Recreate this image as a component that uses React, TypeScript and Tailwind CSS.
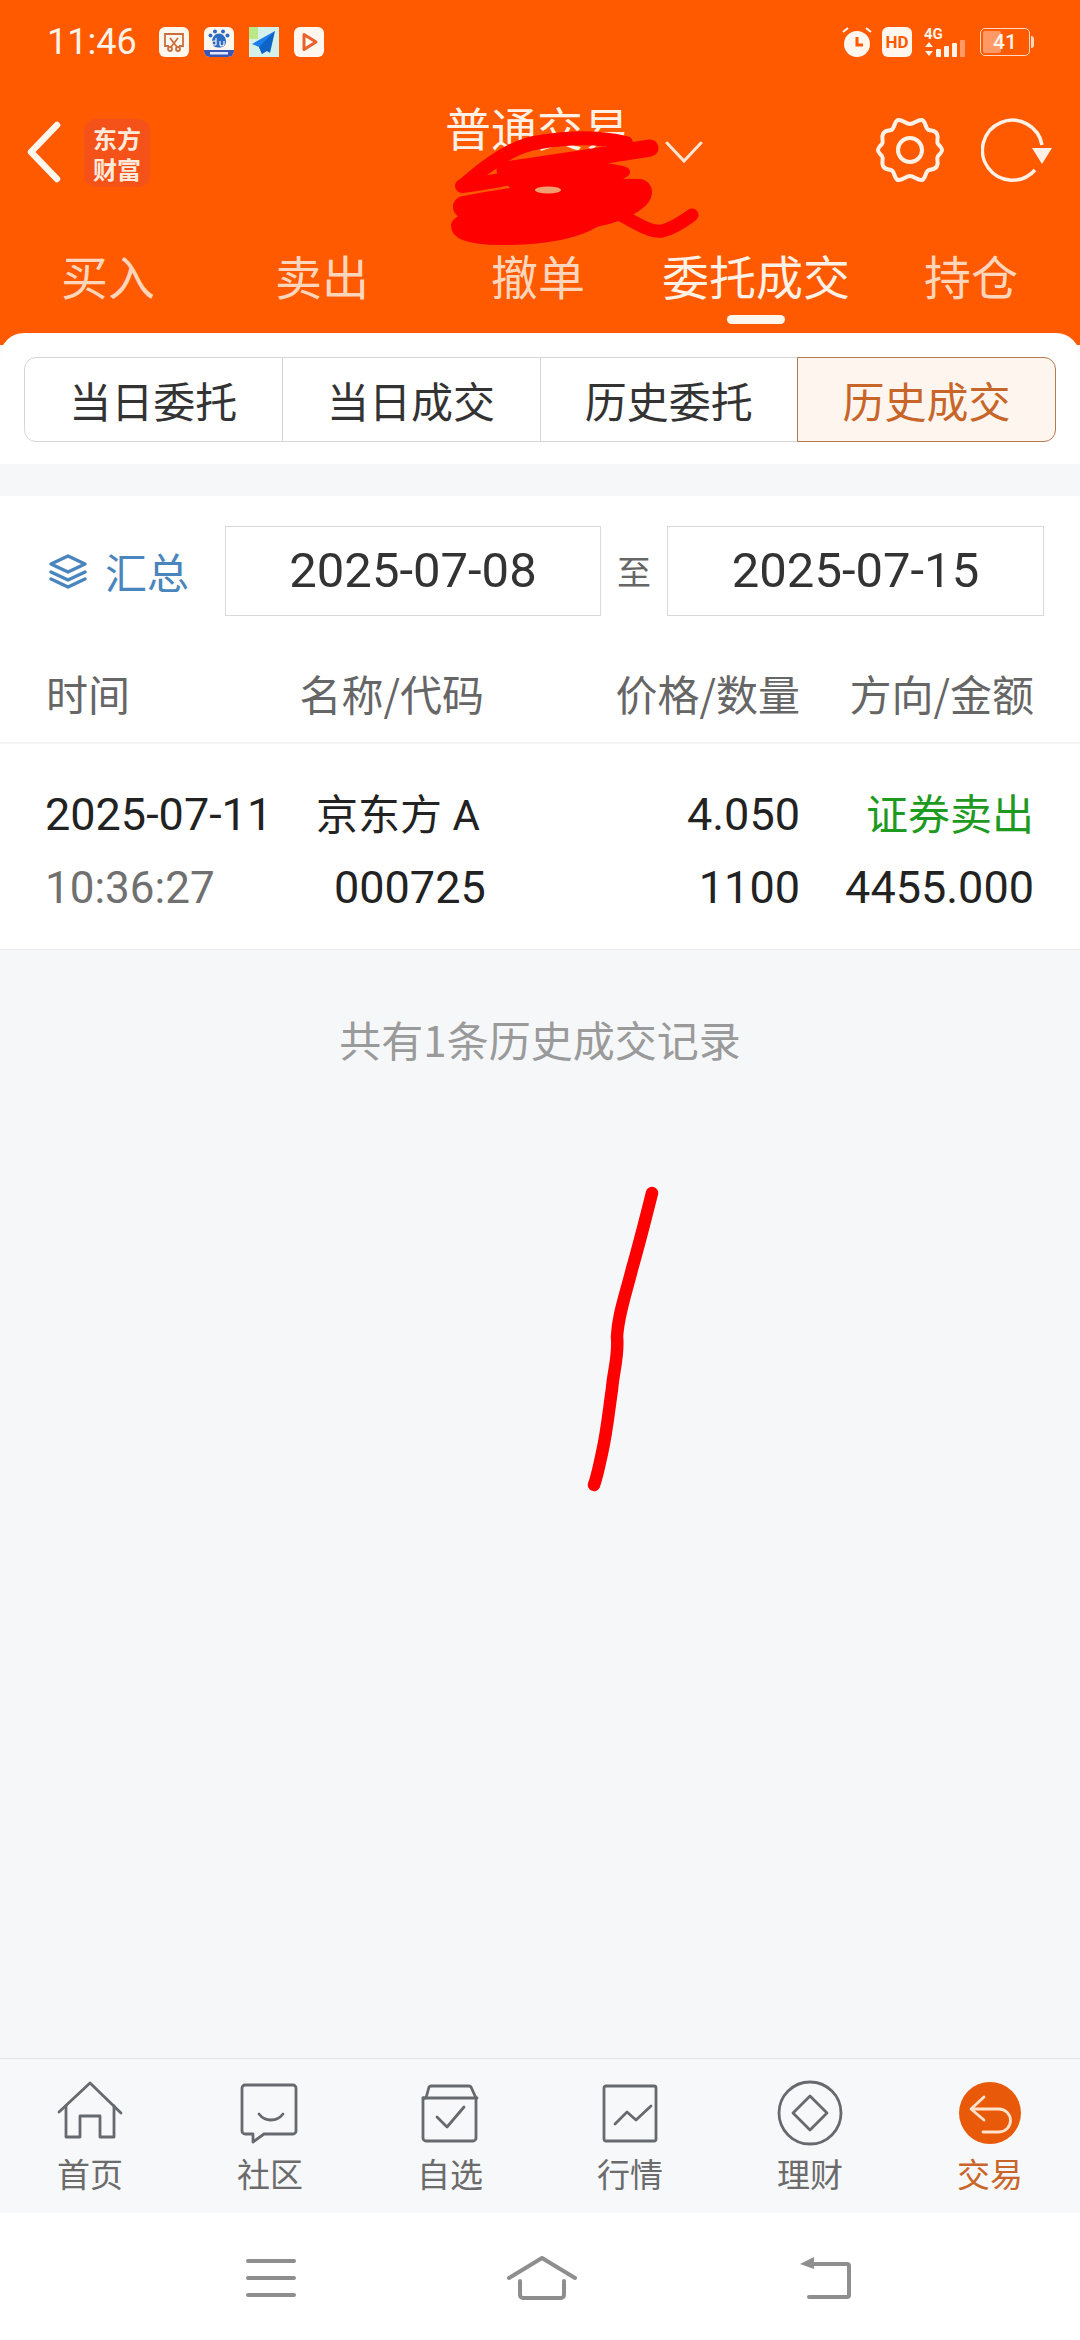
import React from "react";

const CJK = '"Noto Sans CJK SC","Roboto","Noto Sans",sans-serif';

function Tab({ label, active }: { label: string; active?: boolean }) {
  return (
    <div className={`relative text-center text-[47px] leading-[60px] ${active ? "text-[#fff1e6]" : "text-[#ffd5bb]"}`}>
      {label}
      {active && <div className="absolute left-1/2 top-[70px] h-[9px] w-[58px] -translate-x-1/2 rounded-full bg-[#fff6ec]" />}
    </div>
  );
}

function Seg({ label, first, active }: { label: string; first?: boolean; active?: boolean }) {
  return (
    <div
      className={`flex h-[85px] w-[259px] items-center justify-center border text-[42px] ${
        active
          ? "rounded-r-[12px] border-[#b4794f] bg-[#fff5ef] text-[#c8662a]"
          : "border-[#d5d5d5] text-[#333333]"
      } ${first ? "rounded-l-[12px]" : "-ml-px"}`}
    >
      {label}
    </div>
  );
}

function NavItem({ label, active, children }: { label: string; active?: boolean; children: React.ReactNode }) {
  return (
    <div className="flex w-[180px] flex-col items-center">
      <svg width="70" height="70" viewBox="0 0 70 70" fill="none" stroke="#666a6e" strokeWidth="2.8" strokeLinejoin="round" strokeLinecap="round">
        {children}
      </svg>
      <div className={`mt-[2px] text-[33px] leading-[42px] ${active ? "text-[#c9652a]" : "text-[#6b6b6b]"}`}>{label}</div>
    </div>
  );
}

export default function App() {
  return (
    <div className="relative flex h-[2340px] w-[1080px] flex-col overflow-hidden bg-[#f6f7f9]" style={{ fontFamily: CJK }}>
      {/* Header */}
      <div className="relative h-[345px] shrink-0 bg-[#ff5a00]">
        <div className="flex h-[82px] items-center justify-between pl-[47px] pr-[46px] pt-[2px]">
          <div className="flex items-center">
            <span className="w-[93px] text-[36px] leading-none text-[#fff2e6]" style={{ fontFamily: "Roboto,sans-serif" }}>11:46</span>
            <div className="ml-[19px] flex gap-[15px]">
              <div className="flex h-[30px] w-[30px] items-center justify-center rounded-[6px] bg-[#fff6ee]">
                <svg width="24" height="24" viewBox="0 0 24 24" fill="none" stroke="#c96f3d" strokeWidth="1.800">
                  <path d="M7 16H3V4h18v12h-4" />
                  <path d="M8 8l7 9M16 8l-7 9" />
                  <circle cx="8" cy="19" r="2" />
                  <circle cx="16" cy="19" r="2" />
                </svg>
              </div>
              <div className="relative flex h-[30px] w-[30px] items-center justify-center overflow-hidden rounded-[6px] bg-[#fff6ee]">
                <svg width="30" height="30" viewBox="0 0 30 30">
                  <g fill="#2b6cc4">
                    <circle cx="11" cy="4.500" r="2" />
                    <circle cx="19" cy="4.500" r="2" />
                    <circle cx="6.500" cy="8.500" r="2" />
                    <circle cx="23.500" cy="8.500" r="2" />
                    <path d="M15 6.500c3.500 0 7 3.500 7 8 0 5-3.500 6-7 6s-7-1-7-6c0-4.500 3.500-8 7-8z" />
                  </g>
                  <rect x="0" y="23" width="30" height="7" fill="#3a57b5" />
                  <rect x="6" y="25" width="18" height="2.500" fill="#dfe8ff" />
                  <path d="M12 11v7M12 18h-2a2 2 0 0 1 0-4h2M16 14v3a1.500 1.500 0 0 0 4 0v-3" fill="none" stroke="#fff6ee" strokeWidth="1.200" />
                </svg>
              </div>
              <div className="h-[30px] w-[30px]">
                <svg width="30" height="30" viewBox="0 0 30 30">
                  <rect width="30" height="30" fill="#d5f0ea" />
                  <rect width="9" height="12" fill="#b8e986" />
                  <path d="M26 4L3 17l7 3 3 7z" fill="#1a7fe8" />
                  <path d="M26 4L10 20l3 7 5-3 3 2z" fill="#0e63c7" />
                </svg>
              </div>
              <div className="flex h-[30px] w-[30px] items-center justify-center rounded-[6px] bg-[#fff6ee]">
                <svg width="22" height="22" viewBox="0 0 22 22" fill="none">
                  <path d="M6 3.500L18 11 6 18.500z" stroke="#e8602a" strokeWidth="3" strokeLinejoin="round" />
                </svg>
              </div>
            </div>
          </div>
          <div className="flex items-center">
            <svg width="30" height="32" viewBox="0 0 30 32">
              <circle cx="15" cy="18" r="13" fill="#fff6ee" />
              <path d="M15 11v8h6" stroke="#ff5a00" strokeWidth="3" fill="none" />
              <path d="M1 6l5-4M29 6l-5-4" stroke="#fff6ee" strokeWidth="2" />
            </svg>
            <div className="ml-[10px] flex h-[30px] w-[30px] items-center justify-center rounded-[6px] bg-[#fff6ee] text-[17px] font-bold leading-none text-[#ff5a00]" style={{ fontFamily: "Roboto,sans-serif" }}>
              HD
            </div>
            <svg className="ml-[12px]" width="46" height="32" viewBox="0 0 46 32">
              <text x="0" y="13" fontSize="15" fontWeight="700" fill="#fff2e6" fontFamily="Roboto,sans-serif">4G</text>
              <path d="M5 16l-4 5h8zM5 30l-4-5h8z" fill="#fff2e6" />
              <rect x="12" y="23" width="5" height="8" rx="1" fill="#fff2e6" />
              <rect x="20" y="20" width="5" height="11" rx="1" fill="#fff2e6" />
              <rect x="28" y="17" width="5" height="14" rx="1" fill="#fff2e6" />
              <rect x="36" y="14" width="5" height="17" rx="1" fill="#ff9a66" />
            </svg>
            <div className="relative ml-[10px] flex h-[28px] w-[50px] items-center justify-center overflow-hidden rounded-[5px] border-[1.5px] border-[#ffd9bf] text-[21px] font-medium leading-none text-[#fff2e6]" style={{ fontFamily: "Roboto,sans-serif" }}>
              <div className="absolute inset-y-[2px] left-[2px] w-[18px] rounded-[2px] bg-[#ff9a66]" />
              <span className="relative">41</span>
            </div>
            <div className="ml-[1px] h-[12px] w-[3px] rounded-r bg-[#ffd9bf]" />
          </div>
        </div>

        <div className="relative flex h-[150px] items-start">
          <svg className="ml-[26px] mt-[39px]" width="36" height="62" viewBox="0 0 36 62" fill="none" stroke="#fff6ee" strokeWidth="6.500" strokeLinecap="round" strokeLinejoin="round">
            <path d="M31 4L5 31l26 27" />
          </svg>
          <div className="ml-[22px] mt-[37px] flex h-[68px] w-[66px] flex-col items-center justify-center rounded-[12px] bg-[#f5521a] text-[24px] font-bold leading-[31px] text-[#ffeadb]" style={{ fontFamily: '"Noto Sans CJK SC",sans-serif' }}>
            <span>东方</span>
            <span>财富</span>
          </div>
          <div className="absolute left-[445px] top-[14px] text-[46px] leading-[60px] text-[#fff1e6]">普通交易</div>
          <svg className="absolute left-[665px] top-[58px]" width="38" height="24" viewBox="0 0 38 24" fill="none" stroke="#ffe6d3" strokeWidth="3" strokeLinecap="round">
            <path d="M2 3l17 18L36 3" />
          </svg>
          <svg className="absolute left-[875px] top-[33px]" width="70" height="70" viewBox="0 0 70 70" fill="none" stroke="#fff1e6" strokeWidth="4" strokeLinejoin="round">
            <path d="M35 9C39 9 43 4 47 5C51 6 50 14 54 15C57 16 60 15 62 19C64 23 61 26 63 29C65 31 67 33 67 35C67 37 65 39 63 41C61 44 64 47 62 51C60 55 57 54 54 55C50 56 51 64 47 65C43 66 39 61 35 61C31 61 27 66 23 65C19 64 20 56 16 55C13 54 10 55 8 51C6 47 9 44 7 41C5 39 3 37 3 35C3 33 5 31 7 29C9 26 6 23 8 19C10 15 13 16 16 15C20 14 19 6 23 5C27 4 31 9 35 9Z" />
            <circle cx="35" cy="35" r="12" />
          </svg>
          <svg className="absolute left-[981px] top-[33px]" width="76" height="70" viewBox="0 0 76 70" fill="none" stroke="#fff1e6" strokeWidth="3.500">
            <path d="M54 55A30 30 0 1 1 61 30" />
            <path d="M51 33h20L61 49z" fill="#fff1e6" stroke="none" />
          </svg>
        </div>

        <div className="mt-[13px] flex items-start pl-[4px]">
          <div className="w-[208px]"><Tab label="买入" /></div>
          <div className="w-[220px]"><Tab label="卖出" /></div>
          <div className="w-[212px]"><Tab label="撤单" /></div>
          <div className="w-[224px]"><Tab label="委托成交" active /></div>
          <div className="w-[206px]"><Tab label="持仓" /></div>
        </div>
      </div>

      {/* Segmented panel */}
      <div className="relative -mt-[12px] h-[131px] shrink-0 rounded-t-[24px] bg-white px-[24px] pt-[24px]">
        <div className="flex">
          <Seg label="当日委托" first />
          <Seg label="当日成交" />
          <Seg label="历史委托" />
          <Seg label="历史成交" active />
        </div>
      </div>

      {/* Filter + table */}
      <div className="mt-[32px] shrink-0 bg-white">
        <div className="flex h-[150px] items-start pt-[30px]">
          <div className="flex h-[90px] w-[225px] items-center pl-[48px]">
            <svg width="40" height="40" viewBox="0 0 40 40" fill="none" stroke="#4a86bd" strokeWidth="3.500" strokeLinejoin="round" strokeLinecap="round">
              <path d="M20 5l17 8-17 8-17-8z" />
              <path d="M3 21l17 8 17-8" />
              <path d="M3 28l17 8 17-8" />
            </svg>
            <span className="ml-[17px] text-[42px] leading-none text-[#4a86bd]">汇总</span>
          </div>
          <div className="flex h-[90px] w-[376px] items-center justify-center border border-[#d9d9d9] text-[49px] text-[#333333]" style={{ fontFamily: "Roboto,sans-serif" }}>2025-07-08</div>
          <div className="flex h-[90px] w-[66px] items-center justify-center text-[34px] leading-none text-[#666666]">至</div>
          <div className="flex h-[90px] w-[377px] items-center justify-center border border-[#d9d9d9] text-[49px] text-[#333333]" style={{ fontFamily: "Roboto,sans-serif" }}>2025-07-15</div>
        </div>
        <div className="flex h-[98px] items-start border-b-2 border-[#f5f5f5] pr-[46px] pt-[19px] text-[42px] leading-[56px] text-[#666666]">
          <div className="w-[290px] pl-[46px]">时间</div>
          <div className="w-[194px] whitespace-nowrap text-right">名称/代码</div>
          <div className="flex-1 whitespace-nowrap text-right">价格/数量</div>
          <div className="w-[234px] whitespace-nowrap text-right">方向/金额</div>
        </div>
        <div className="h-[206px] border-b border-[#ececec] pr-[46px] pt-[46px] text-[45px] text-[#222222]" style={{ fontFamily: 'Roboto,"Noto Sans CJK SC",sans-serif' }}>
          <div className="flex h-[50px] items-center">
            <div className="w-[316px] pl-[45px]">2025-07-11</div>
            <div className="w-[170px] whitespace-nowrap text-[42px]">京东方 A</div>
            <div className="flex-1 text-right">4.050</div>
            <div className="w-[234px] text-right text-[42px] text-[#1e9a22]">证券卖出</div>
          </div>
          <div className="mt-[23px] flex h-[50px] items-center">
            <div className="w-[334px] pl-[45px] text-[44px] text-[#707070]">10:36:27</div>
            <div className="w-[150px]">000725</div>
            <div className="flex-1 text-right">1100</div>
            <div className="w-[234px] text-right">4455.000</div>
          </div>
        </div>
      </div>

      {/* Empty area */}
      <div className="relative min-h-0 flex-1">
        <div className="mt-[59px] text-center text-[42px] leading-[60px] text-[#9a9a9a]">共有1条历史成交记录</div>
        <svg className="absolute left-[570px] top-[235px]" width="90" height="320" viewBox="0 0 90 320" fill="none" stroke="#ff0000" strokeWidth="12.500" strokeLinecap="round" strokeLinejoin="round">
          <path d="M82 8C76 32 70 56 62 84 55 112 48 130 47 152 49 170 43 188 42 204 39 224 37 246 32 268 29 282 27 292 24 300" />
        </svg>
      </div>

      {/* Bottom nav */}
      <div className="flex h-[155px] shrink-0 border-t border-[#e4e4e4] bg-[#f7f8fa] pt-[21px]">
        <NavItem label="首页">
          <path d="M4 32L35 3l31 30" />
          <path d="M11 26v31h14V36h20v21h14V26" />
        </NavItem>
        <NavItem label="社区">
          <path d="M10 5h48a3 3 0 0 1 3 3v43a3 3 0 0 1-3 3H29l-11 8v-8h-8a3 3 0 0 1-3-3V8a3 3 0 0 1 3-3z" />
          <path d="M24 34c6 8 18 8 24 0" />
        </NavItem>
        <NavItem label="自选">
          <path d="M11 18l3-11a3 3 0 0 1 2-1h38a3 3 0 0 1 2 1l5 11v40a3 3 0 0 1-3 3H11a3 3 0 0 1-3-3V18z" />
          <path d="M8 18h54" />
          <path d="M22 37l10 10 17-20" />
        </NavItem>
        <NavItem label="行情">
          <rect x="9" y="6" width="52" height="55" rx="2" />
          <path d="M20 44l12-12 9 8 15-14" />
        </NavItem>
        <NavItem label="理财">
          <circle cx="35" cy="33" r="31" />
          <path d="M35 16l17 17-17 17-17-17z" />
        </NavItem>
        <NavItem label="交易" active>
          <circle cx="35" cy="33" r="31" fill="#e85a0a" stroke="none" />
          <path d="M29 17L16 29l13 11" stroke="#ffe3cc" strokeWidth="2.800" />
          <path d="M17 29h27a10 10 0 0 1 0 23H28" stroke="#ffe3cc" strokeWidth="2.800" />
        </NavItem>
      </div>

      {/* Android nav */}
      <div className="flex h-[127px] shrink-0 items-start bg-white pt-[46px]">
        <svg className="ml-[246px]" width="50" height="40" viewBox="0 0 50 40" stroke="#8e8e8e" strokeWidth="4" strokeLinecap="round">
          <path d="M2 2h46M2 19h46M2 36h46" />
        </svg>
        <svg className="ml-[211px] -mt-[3px]" width="70" height="44" viewBox="0 0 70 44" fill="none" stroke="#8e8e8e" strokeWidth="4" strokeLinecap="round" strokeLinejoin="round">
          <path d="M2 22L35 2l33 20" />
          <path d="M13 25v14a3 3 0 0 0 3 3h38a3 3 0 0 0 3-3V25" />
        </svg>
        <svg className="ml-[222px] -mt-[3px]" width="52" height="44" viewBox="0 0 52 44" fill="none" stroke="#8e8e8e" strokeWidth="4" strokeLinecap="round" strokeLinejoin="round">
          <path d="M12 8h36a2 2 0 0 1 2 2v29a2 2 0 0 1-2 2H10" />
          <path d="M15 1v12L1 8z" fill="#8e8e8e" stroke="none" />
        </svg>
      </div>

      {/* Red scribble */}
      <svg className="absolute left-[400px] top-[110px]" width="320" height="140" viewBox="0 0 320 140" fill="none" stroke="#ff0000" strokeLinecap="round" strokeLinejoin="round">
        <path d="M64 75C90 52 115 35 140 32 170 27 200 27 226 33" strokeWidth="14" />
        <path d="M105 60C150 54 200 46 250 38" strokeWidth="17" />
        <path d="M62 76C95 72 110 68 130 64" strokeWidth="14" />
        <path d="M105 62C150 56 205 55 225 62L195 78 120 84Z" fill="#ff0000" strokeWidth="10" />
        <path d="M64 97C120 86 190 78 240 80 246 86 225 100 195 106" strokeWidth="22" />
        <path d="M60 116C85 94 130 88 205 98 190 118 150 126 100 126 75 126 60 122 60 116Z" fill="#ff0000" strokeWidth="18" />
        <path d="M217 103C235 112 250 123 262 121 275 118 285 110 292 105" strokeWidth="13" />
        <ellipse cx="148" cy="80" rx="13" ry="3.500" fill="#f0a070" stroke="none" />
      </svg>
    </div>
  );
}
